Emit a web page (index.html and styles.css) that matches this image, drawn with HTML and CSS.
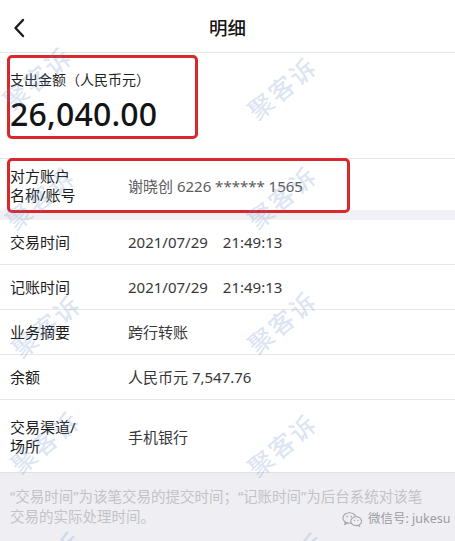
FILE: index.html
```html
<!DOCTYPE html>
<html lang="zh-CN">
<head>
<meta charset="utf-8">
<title>明细</title>
<link rel="stylesheet" href="styles.css">
</head>
<body>
<div class="page">
  <header class="nav">
    <span class="back">
      <svg width="14" height="20" viewBox="0 0 14 20"><path d="M10 2 L2.5 10 L10 18" fill="none" stroke="#1c1c1c" stroke-width="2.4" stroke-linecap="round" stroke-linejoin="round"/></svg>
    </span>
    <h1 class="title">明细</h1>
    <span></span>
  </header>

  <section class="amount">
    <div class="amount-label">支出金额（人民币元）</div>
    <div class="amount-value">26,040.00</div>
  </section>

  <section class="row row-account">
    <div class="label">对方账户<br>名称/账号</div>
    <div class="value muted">谢晓创 6226 ****** 1565</div>
  </section>

  <div class="gap"></div>

  <section class="list">
    <div class="row">
      <div class="label">交易时间</div>
      <div class="value"><span>2021/07/29</span><span class="time">21:49:13</span></div>
    </div>
    <div class="row">
      <div class="label">记账时间</div>
      <div class="value"><span>2021/07/29</span><span class="time">21:49:13</span></div>
    </div>
    <div class="row">
      <div class="label">业务摘要</div>
      <div class="value">跨行转账</div>
    </div>
    <div class="row">
      <div class="label">余额</div>
      <div class="value">人民币元 7,547.76</div>
    </div>
    <div class="row row-tall">
      <div class="label">交易渠道/<br>场所</div>
      <div class="value">手机银行</div>
    </div>
  </section>

  <footer class="note">
    <span class="note-line">“交易时间”为该笔交易的提交时间；“记账时间”为后台系统对该笔</span>
    <span class="note-line">交易的实际处理时间。</span>
  </footer>

  <div class="mark mark-amount"></div>
  <div class="mark mark-account"></div>

  <div class="wm wm-l1">聚客诉</div>
  <div class="wm wm-r1">聚客诉</div>
  <div class="wm wm-l2">聚客诉</div>
  <div class="wm wm-r2">聚客诉</div>
  <div class="wm wm-l3">聚客诉</div>
  <div class="wm wm-r3">聚客诉</div>
  <div class="wm wm-l4">聚客诉</div>
  <div class="wm wm-r4">聚客诉</div>
  <div class="wm wm-l5">聚客诉</div>
  <div class="wm wm-r5">聚客诉</div>

  <div class="credit">
    <svg width="21" height="15" viewBox="0 0 21 15">
      <ellipse cx="7.5" cy="6" rx="6.6" ry="5.3" fill="none" stroke="#a4a4a8" stroke-width="1.1"/>
      <path d="M3.5 10 L2.6 12.6 L5.6 11" fill="none" stroke="#a4a4a8" stroke-width="1.1" stroke-linejoin="round"/>
      <ellipse cx="14.2" cy="9.2" rx="5.4" ry="4.4" fill="#efeff3" stroke="#a4a4a8" stroke-width="1.1"/>
      <path d="M16.8 13 L18 14.6 L15.6 13.4" fill="none" stroke="#a4a4a8" stroke-width="1"/>
      <circle cx="5.3" cy="4.6" r="0.8" fill="#a4a4a8"/>
      <circle cx="9.3" cy="4.6" r="0.8" fill="#a4a4a8"/>
      <circle cx="12.5" cy="8.4" r="0.65" fill="#a4a4a8"/>
      <circle cx="15.9" cy="8.4" r="0.65" fill="#a4a4a8"/>
    </svg>
    <span>微信号: jukesu</span>
  </div>
</div>
</body>
</html>
```

FILE: styles.css
```css
* { box-sizing: border-box; }

html, body {
  margin: 0;
  padding: 0;
  background: #ffffff;
}

body {
  font-family: "Noto Sans", "Noto Sans CJK SC", sans-serif;
  color: #1a1a1a;
}

.page {
  position: relative;
  width: 455px;
  min-height: 541px;
  display: flex;
  flex-direction: column;
  overflow: hidden;
}

.nav {
  height: 53px;
  display: grid;
  grid-template-columns: 1fr auto 1fr;
  align-items: center;
  padding-top: 3px;
  border-bottom: 1px solid #e6e6e8;
}

.back {
  display: flex;
  align-items: center;
  padding-left: 13px;
}

.back svg { display: block; }

.title {
  margin: 0;
  font-size: 18.5px;
  font-weight: 500;
  line-height: 24px;
  color: #151515;
}

.amount {
  padding: 17px 10px 0 10px;
  height: 106px;
  border-bottom: 1px solid #e8e8ea;
}

.amount-label {
  font-size: 14px;
  line-height: 20px;
  color: #1f1f1f;
}

.amount-value {
  margin-top: 4px;
  font-size: 32px;
  line-height: 40px;
  font-weight: 500;
  color: #141414;
  letter-spacing: 0.2px;
}

.row {
  display: grid;
  grid-template-columns: 118px 1fr;
  align-items: center;
  padding: 0 10px;
  height: 45px;
  border-bottom: 1px solid #e8e8ea;
}

.label {
  font-size: 15px;
  line-height: 19px;
  color: #1c1c1c;
}

.value {
  font-size: 15px;
  line-height: 19px;
  color: #383838;
}

.value .time { margin-left: 15px; }

.muted { color: #5c5c5e; }

.row-account {
  height: 51px;
  padding-top: 3px;
  border-bottom: none;
}

.gap {
  height: 10px;
  background: #f1f1f5;
}

.row-tall {
  height: 73px;
  padding-top: 2px;
  border-bottom: 1px solid #e2e2e6;
}

.note {
  flex: 1;
  display: flex;
  flex-direction: column;
  align-items: flex-start;
  background: #efeff3;
  padding: 13px 10px 0 10px;
  font-size: 14.5px;
  line-height: 20px;
  color: #c3c3c7;
}

.note-line { white-space: nowrap; }

.mark {
  position: absolute;
  border: 3px solid #d9282b;
  border-radius: 5px;
}

.mark-amount {
  left: 7px;
  top: 55px;
  width: 191px;
  height: 84px;
}

.mark-account {
  left: 7px;
  top: 158px;
  width: 343px;
  height: 55px;
}

.wm {
  position: absolute;
  transform: translate(-50%, -50%) rotate(-40deg);
  font-size: 25px;
  font-weight: 500;
  letter-spacing: 2px;
  line-height: 28px;
  color: rgba(105, 140, 200, 0.24);
  white-space: nowrap;
  pointer-events: none;
}

.wm-l1 { left: 37px; top: 78px; }
.wm-r1 { left: 282px; top: 88px; }
.wm-l2 { left: 40px; top: 198px; }
.wm-r2 { left: 282px; top: 197px; }
.wm-l3 { left: 46px; top: 326px; }
.wm-r3 { left: 282px; top: 322px; }
.wm-l4 { left: 45px; top: 442px; }
.wm-r4 { left: 282px; top: 445px; }
.wm-l5 { left: 47px; top: 562px; }
.wm-r5 { left: 290px; top: 563px; }

.credit {
  position: absolute;
  left: 342px;
  top: 511px;
  display: flex;
  align-items: center;
  gap: 5px;
  font-size: 12.5px;
  line-height: 16px;
  color: #9c9ca0;
}

.credit svg { display: block; }
```
